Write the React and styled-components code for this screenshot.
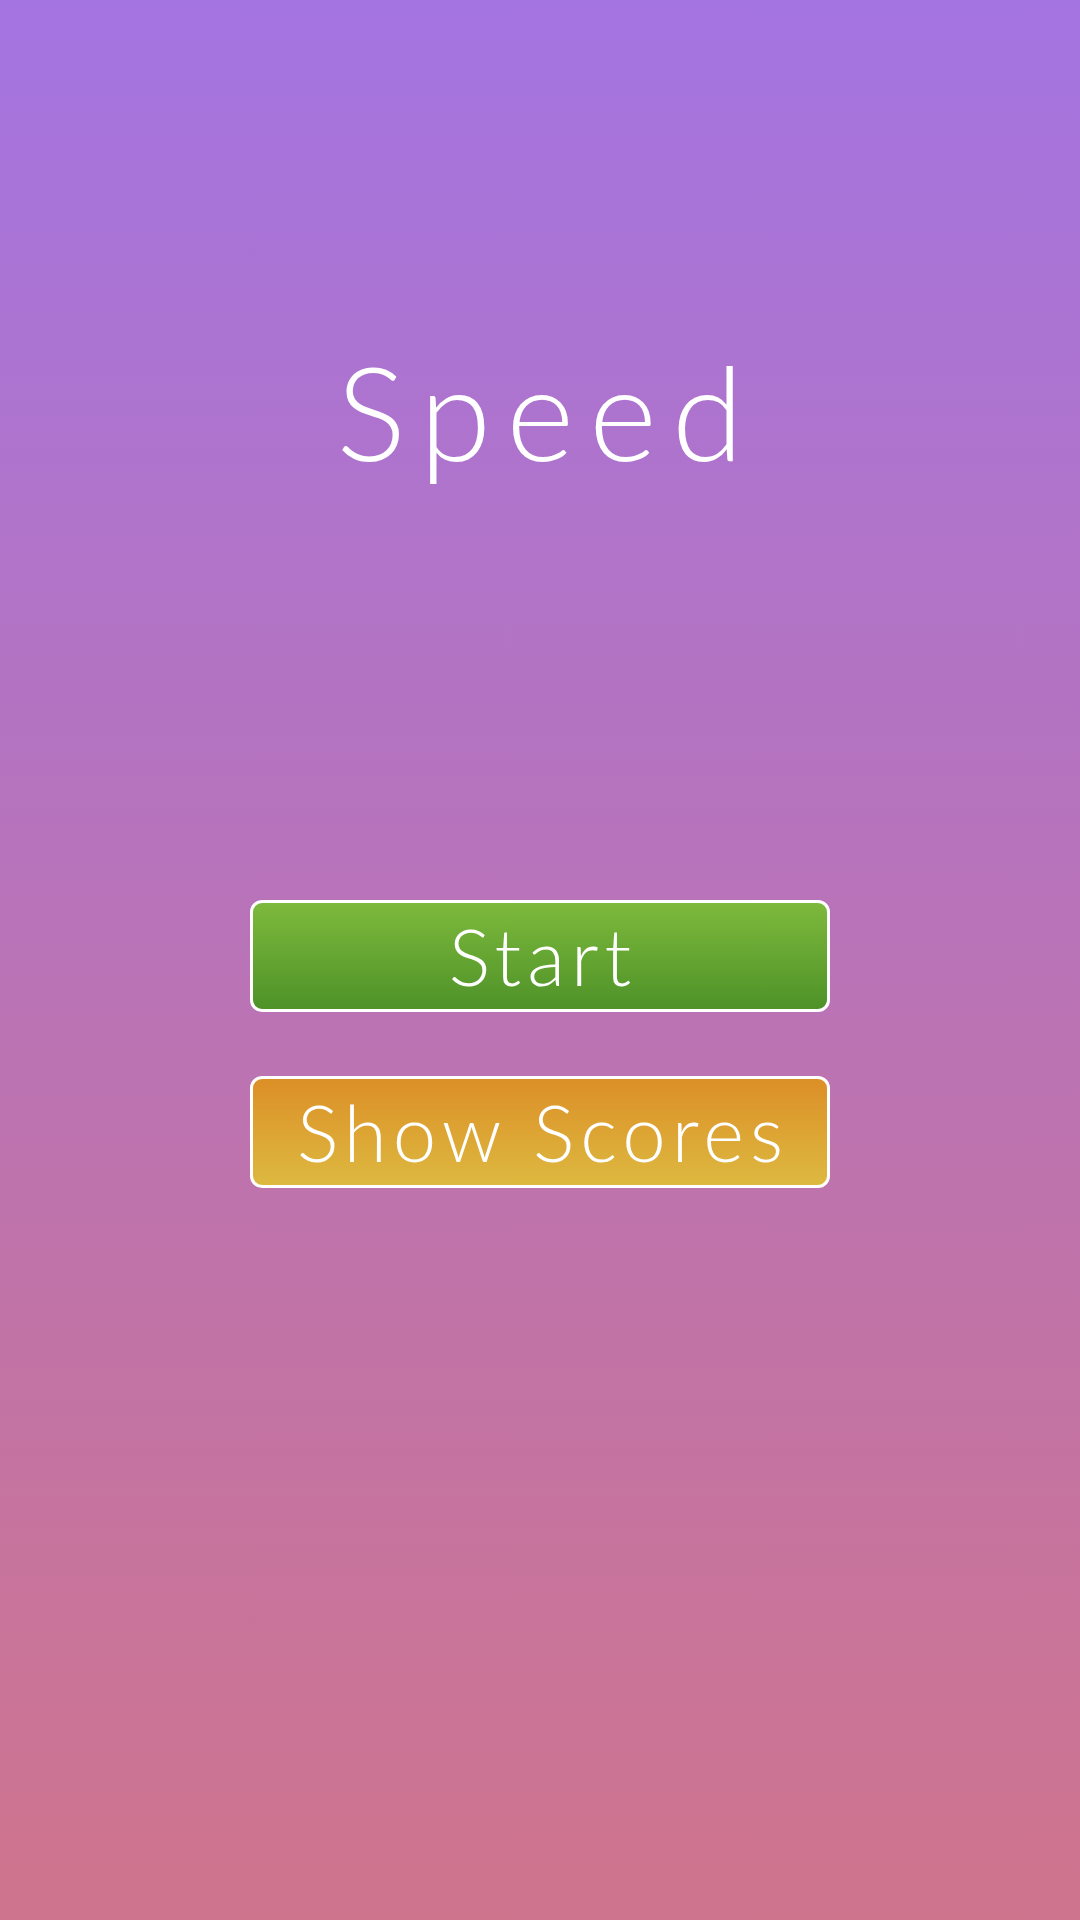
import styled, { createGlobalStyle } from "styled-components";

const GlobalStyle = createGlobalStyle`
  html, body {
    margin: 0;
    padding: 0;
  }
  body {
    font-family: "Lato", "Open Sans", sans-serif;
  }
`;

const Screen = styled.div`
  width: 1080px;
  height: 1920px;
  display: flex;
  flex-direction: column;
  align-items: center;
  background: linear-gradient(180deg, #a474e1 0%, #b873b9 47%, #cf748d 100%);
  color: #ffffff;
`;

const Title = styled.h1`
  margin: 0;
  padding-top: 346px;
  padding-left: 15px;
  font-family: "Lato", sans-serif;
  font-weight: 300;
  font-size: 130px;
  line-height: 1;
  letter-spacing: 15px;
`;

const Menu = styled.div`
  margin-top: 424px;
  display: flex;
  flex-direction: column;
  gap: 64px;
`;

const MenuButton = styled.button`
  width: 580px;
  height: 112px;
  box-sizing: border-box;
  border: 3px solid #ffffff;
  border-radius: 12px;
  background: ${(p) =>
    p.$variant === "scores"
      ? "linear-gradient(180deg, #dc8f27 0%, #ddb940 100%)"
      : "linear-gradient(180deg, #7db93c 0%, #4e9228 100%)"};
  color: #ffffff;
  font-family: "Lato", sans-serif;
  font-weight: 300;
  font-size: 78px;
  line-height: 1;
  letter-spacing: 6px;
  display: flex;
  align-items: center;
  justify-content: center;
  padding: 0 0 0 6px;
  cursor: pointer;
`;

const App = () => {
  return (
    <>
      <GlobalStyle />
      <Screen>
        <Title>Speed</Title>
        <Menu>
          <MenuButton $variant="start">Start</MenuButton>
          <MenuButton $variant="scores">Show Scores</MenuButton>
        </Menu>
      </Screen>
    </>
  );
};

export default App;
